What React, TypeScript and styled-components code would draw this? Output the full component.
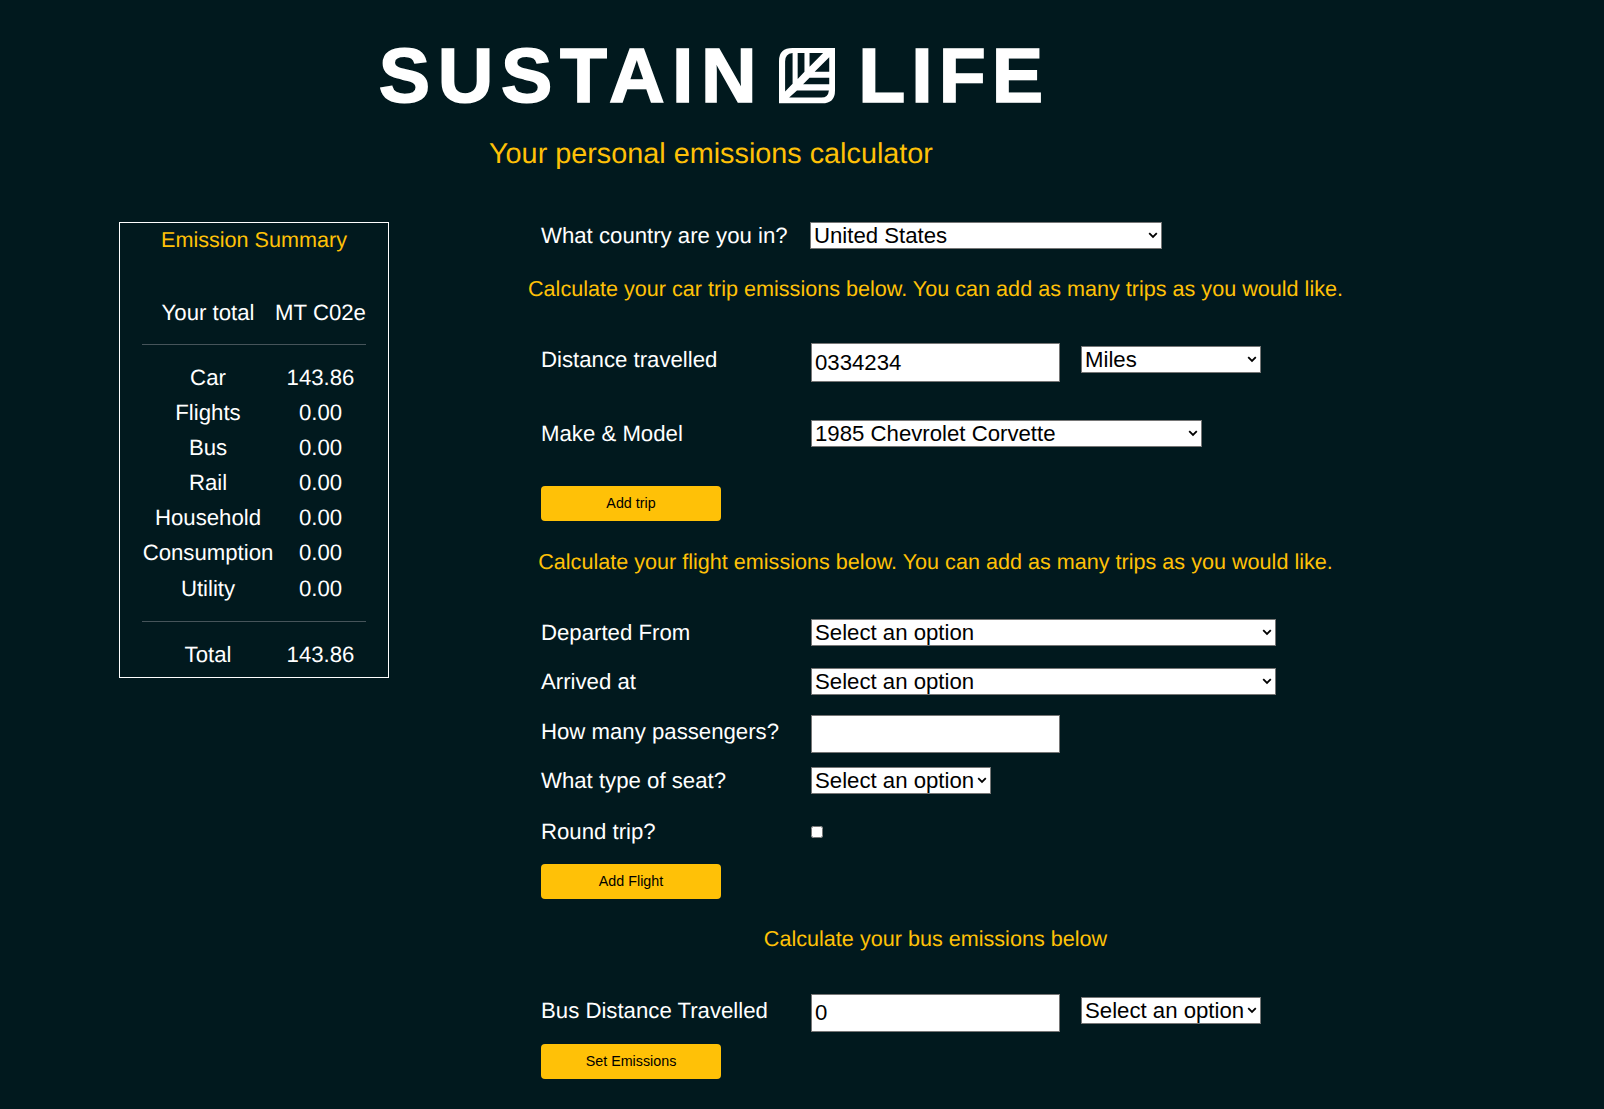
import React from "react";
import styled, { createGlobalStyle } from "styled-components";

const Global = createGlobalStyle`
  html, body { margin: 0; padding: 0; background: #01191e; }
  body {
    font-family: "Liberation Sans", Arial, sans-serif;
    color: #fff;
    text-rendering: geometricPrecision;
  }
`;

const chevron =
  "data:image/svg+xml;utf8," +
  encodeURIComponent(
    '<svg xmlns="http://www.w3.org/2000/svg" width="10" height="7" viewBox="0 0 10 7"><path d="M1.2 1.2L5 5L8.8 1.2" fill="none" stroke="#000" stroke-width="1.8"/></svg>'
  );

const Page = styled.div`
  width: 1604px;
  height: 1109px;
  overflow: hidden;
  background: #01191e;
  box-sizing: border-box;
`;

const Header = styled.header`
  width: 1422px;
  padding-top: 38px;
  display: flex;
  flex-direction: column;
  align-items: center;
`;

const Logo = styled.div`
  display: flex;
  align-items: center;
  height: 76px;
  margin-left: 6px;
  color: #fff;
  font-weight: 700;
  font-size: 77px;
  line-height: 76px;
  -webkit-text-stroke: 1.6px #fff;
`;

const LogoWord = styled.span<{ $spacing: number }>`
  letter-spacing: ${(p) => p.$spacing}px;
`;

const LeafSvg = styled.svg`
  width: 56px;
  height: 56px;
  margin: 0 23px 0 15px;
  flex: none;
`;

const Subtitle = styled.h1`
  margin: 24px 0 0;
  font-size: 28.8px;
  line-height: 33px;
  font-weight: 400;
  color: #ffc107;
`;

const Main = styled.main`
  display: flex;
  align-items: flex-start;
  margin-top: 51px;
  padding-left: 119px;
`;

const Summary = styled.aside`
  width: 270px;
  height: 456px;
  box-sizing: border-box;
  border: 1px solid #fff;
  padding: 5px 22px 0;
  flex: none;
`;

const SummaryTitle = styled.h2`
  margin: 0;
  text-align: center;
  font-size: 21.6px;
  line-height: 24px;
  font-weight: 400;
  color: #ffc107;
`;

const SummaryRow = styled.div<{ $top?: number }>`
  display: grid;
  grid-template-columns: 132px 93px;
  height: 35.15px;
  align-items: center;
  text-align: center;
  font-size: 22.2px;
  margin-top: ${(p) => p.$top ?? 0}px;
`;

const Rule = styled.hr<{ $top: number }>`
  border: 0;
  height: 1px;
  background: #46545a;
  margin: ${(p) => p.$top}px 0 0;
  width: 224px;
`;

const Form = styled.section`
  width: 815px;
  margin-left: 139px;
  flex: none;
`;

const Label = styled.label`
  width: 270px;
  flex: none;
  margin-top: 1px;
  font-size: 22.2px;
  line-height: 26px;
  color: #fff;
`;

const Select = styled.select<{ $w: number; $left?: number }>`
  appearance: none;
  width: ${(p) => p.$w}px;
  height: 27px;
  box-sizing: border-box;
  margin: 0 0 0 ${(p) => p.$left ?? 0}px;
  padding: 0 0 0 3px;
  border: 1px solid #767676;
  border-radius: 0;
  background: #fff url("${chevron}") no-repeat right 3px center;
  color: #000;
  font-family: "Liberation Sans", Arial, sans-serif;
  font-size: 22.2px;
  line-height: 25px;
  flex: none;
`;

const Row = styled.div<{ $top?: number; $tall?: boolean }>`
  display: flex;
  align-items: flex-start;
  padding-left: 13px;
  margin-top: ${(p) => p.$top ?? 0}px;
  ${(p) => (p.$tall ? `label { margin-top: 4px; } select { margin-top: 3px; }` : "")}
`;

const Heading = styled.h3<{ $top: number }>`
  margin: ${(p) => p.$top}px 0 0;
  text-align: center;
  font-size: 21.6px;
  line-height: 26px;
  font-weight: 400;
  color: #ffc107;
  white-space: nowrap;
`;

const TextInput = styled.input<{ $h?: number }>`
  width: 249px;
  height: ${(p) => p.$h ?? 39}px;
  box-sizing: border-box;
  margin: 0;
  padding: 0 3px;
  border: 1px solid #767676;
  border-radius: 0;
  background: #fff;
  color: #000;
  font-family: "Liberation Sans", Arial, sans-serif;
  font-size: 22.2px;
  flex: none;
  outline: none;
`;

const Check = styled.input`
  width: 12px;
  height: 12px;
  margin: 8px 0 0;
  accent-color: #fff;
`;

const Button = styled.button<{ $top: number }>`
  display: block;
  width: 180px;
  height: 35px;
  margin: ${(p) => p.$top}px 0 0 13px;
  padding: 0 0 2px;
  border: 0;
  border-radius: 4px;
  background: #ffc107;
  color: #000;
  font-family: "Liberation Sans", Arial, sans-serif;
  font-size: 14.3px;
`;

const Leaf = () => (
  <LeafSvg viewBox="60 55 165 165" aria-hidden="true">
    <path
      fill="#fff"
      fillRule="evenodd"
      d="M100 55H225V180Q225 218 187 218H60V93Q60 55 100 55Z
         M100 70Q78 72 78 95V183L100 160Z
         M115 70V146L135 125V70Z
         M150 70V110L190 70Z
         M208 82L165 125H208Z
         M150 143L131 162H208V143Z
         M113 180L90 201H185Q205 201 207 180Z"
    />
  </LeafSvg>
);

const rows: [string, string][] = [
  ["Flights", "0.00"],
  ["Bus", "0.00"],
  ["Rail", "0.00"],
  ["Household", "0.00"],
  ["Consumption", "0.00"],
  ["Utility", "0.00"],
];

const Opt = ({ v }: { v: string }) => <option>{v}</option>;

export default function App() {
  return (
    <Page>
      <Global />
      <Header>
        <Logo>
          <LogoWord $spacing={7.6}>SUSTAIN</LogoWord>
          <Leaf />
          <LogoWord $spacing={6}>LIFE</LogoWord>
        </Logo>
        <Subtitle>Your personal emissions calculator</Subtitle>
      </Header>
      <Main>
        <Summary>
          <SummaryTitle>Emission Summary</SummaryTitle>
          <SummaryRow $top={43}>
            <span>Your total</span>
            <span>MT C02e</span>
          </SummaryRow>
          <Rule $top={14} />
          <SummaryRow $top={15}>
            <span>Car</span>
            <span>143.86</span>
          </SummaryRow>
          {rows.map(([a, b]) => (
            <SummaryRow key={a}>
              <span>{a}</span>
              <span>{b}</span>
            </SummaryRow>
          ))}
          <Rule $top={15} />
          <SummaryRow $top={15}>
            <span>Total</span>
            <span>143.86</span>
          </SummaryRow>
        </Summary>
        <Form>
          <Row>
            <Label>What country are you in?</Label>
            <Select $w={352} $left={-1}><Opt v="United States" /></Select>
          </Row>
          <Heading $top={27}>Calculate your car trip emissions below. You can add as many trips as you would like.</Heading>
          <Row $top={41} $tall>
            <Label>Distance travelled</Label>
            <TextInput defaultValue="0334234" />
            <Select $w={180} $left={21}><Opt v="Miles" /></Select>
          </Row>
          <Row $top={38}>
            <Label>Make &amp; Model</Label>
            <Select $w={391}><Opt v="1985 Chevrolet Corvette" /></Select>
          </Row>
          <Button $top={39}>Add trip</Button>
          <Heading $top={28}>Calculate your flight emissions below. You can add as many trips as you would like.</Heading>
          <Row $top={44}>
            <Label>Departed From</Label>
            <Select $w={465}><Opt v="Select an option" /></Select>
          </Row>
          <Row $top={22}>
            <Label>Arrived at</Label>
            <Select $w={465}><Opt v="Select an option" /></Select>
          </Row>
          <Row $top={20} $tall>
            <Label>How many passengers?</Label>
            <TextInput $h={38} />
          </Row>
          <Row $top={14}>
            <Label>What type of seat?</Label>
            <Select $w={180}><Opt v="Select an option" /></Select>
          </Row>
          <Row $top={24}>
            <Label>Round trip?</Label>
            <Check type="checkbox" />
          </Row>
          <Button $top={19}>Add Flight</Button>
          <Heading $top={27}>Calculate your bus emissions below</Heading>
          <Row $top={42} $tall>
            <Label>Bus Distance Travelled</Label>
            <TextInput defaultValue="0" $h={38} />
            <Select $w={180} $left={21}><Opt v="Select an option" /></Select>
          </Row>
          <Button $top={12}>Set Emissions</Button>
        </Form>
      </Main>
    </Page>
  );
}
